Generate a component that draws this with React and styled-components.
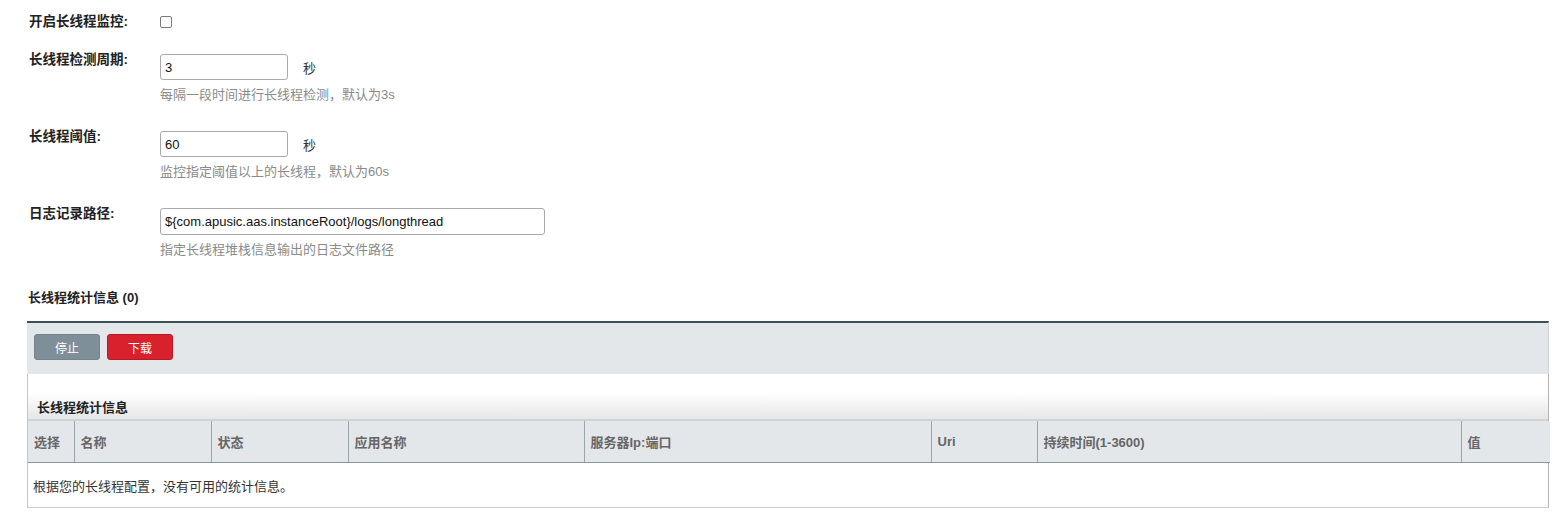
import React from "react";
import styled, { createGlobalStyle } from "styled-components";

const GlobalStyle = createGlobalStyle`
    body{
        margin: 0;
        background: #ffffff;
        font-family: "Liberation Sans", "Noto Sans CJK SC", sans-serif;
        font-size: 13px;
        color: #333333;
    }
`;

const columns = [
    { title: "选择", width: 46 },
    { title: "名称", width: 137 },
    { title: "状态", width: 137 },
    { title: "应用名称", width: 236 },
    { title: "服务器Ip:端口", width: 347 },
    { title: "Uri", width: 106 },
    { title: "持续时间(1-3600)", width: 424 },
    { title: "值", width: 89 },
];

function App()
{
    return(
        <PageStyled>
            <GlobalStyle />
            <FormRow $top={13}>
                <Label>开启长线程监控:</Label>
                <Field>
                    <Check type="checkbox" />
                </Field>
            </FormRow>

            <FormRow $top={23}>
                <Label $lift>长线程检测周期:</Label>
                <Field>
                    <InputLine>
                        <TextInput $width={128} defaultValue="3" />
                        <Unit>秒</Unit>
                    </InputLine>
                    <Hint>每隔一段时间进行长线程检测，默认为3s</Hint>
                </Field>
            </FormRow>

            <FormRow $top={27}>
                <Label $lift>长线程阈值:</Label>
                <Field>
                    <InputLine>
                        <TextInput $width={128} defaultValue="60" />
                        <Unit>秒</Unit>
                    </InputLine>
                    <Hint>监控指定阈值以上的长线程，默认为60s</Hint>
                </Field>
            </FormRow>

            <FormRow $top={27}>
                <Label $lift>日志记录路径:</Label>
                <Field>
                    <InputLine>
                        <TextInput $width={385} $height={27} defaultValue="${com.apusic.aas.instanceRoot}/logs/longthread" />
                    </InputLine>
                    <Hint>指定长线程堆栈信息输出的日志文件路径</Hint>
                </Field>
            </FormRow>

            <SectionTitle>长线程统计信息 (0)</SectionTitle>

            <Panel>
                <Toolbar>
                    <Button $kind="stop">停止</Button>
                    <Button $kind="download">下载</Button>
                </Toolbar>
                <TableBox>
                    <Caption>长线程统计信息</Caption>
                    <Table>
                        <colgroup>
                            {columns.map((c) => <col key={c.title} style={{ width: c.width }} />)}
                        </colgroup>
                        <thead>
                            <tr>
                                {columns.map((c) => <HeadCell key={c.title}>{c.title}</HeadCell>)}
                            </tr>
                        </thead>
                        <tbody>
                            <tr>
                                <EmptyCell colSpan={columns.length}>根据您的长线程配置，没有可用的统计信息。</EmptyCell>
                            </tr>
                        </tbody>
                    </Table>
                </TableBox>
            </Panel>
        </PageStyled>
    )
}

const PageStyled = styled.div`
    padding: 0 19px 20px 27px;
`;

const FormRow = styled.div`
    display: flex;
    align-items: flex-start;
    margin-top: ${(p) => p.$top}px;
`;

const Label = styled.div`
    width: 131px;
    padding-left: 2px;
    margin-top: ${(p) => (p.$lift ? -3 : 0)}px;
    box-sizing: border-box;
    font-weight: bold;
    font-size: 13.5px;
    line-height: 18px;
    color: #222222;
    flex-shrink: 0;
`;

const Field = styled.div`
    display: flex;
    flex-direction: column;
`;

const Check = styled.input`
    appearance: none;
    margin: 3px 0 0 2px;
    width: 12px;
    height: 12px;
    border: 1px solid #7a7a7a;
    border-radius: 2px;
    background: #ffffff;
`;

const InputLine = styled.div`
    display: flex;
    align-items: center;
    gap: 15px;
`;

const TextInput = styled.input`
    width: ${(p) => p.$width}px;
    height: ${(p) => p.$height || 26}px;
    box-sizing: border-box;
    margin: 0 0 0 2px;
    padding: 0 4px;
    border: 1px solid #a9a9a9;
    border-radius: 3px;
    font-family: "Liberation Sans", "Noto Sans CJK SC", sans-serif;
    font-size: 13px;
    color: #111111;
    outline: none;
`;

const Unit = styled.span`
    font-size: 13px;
    color: #333333;
`;

const Hint = styled.div`
    margin: 6px 0 0 2px;
    font-size: 13px;
    line-height: 18px;
    color: #8a8a8a;
`;

const SectionTitle = styled.div`
    margin-top: 30px;
    padding-left: 1px;
    font-weight: bold;
    font-size: 13px;
    line-height: 18px;
    color: #222222;
`;

const Panel = styled.div`
    margin-top: 14px;
`;

const Toolbar = styled.div`
    display: flex;
    gap: 7px;
    height: 53px;
    box-sizing: border-box;
    padding: 11px 7px 0;
    background: #e4e7ea;
    border-top: 2px solid #3d4f59;
    border-right: 1px solid #d0d4d6;
`;

const Button = styled.button`
    width: 66px;
    height: 26px;
    border-radius: 3px;
    border: 1px solid ${(p) => (p.$kind === "download" ? "#b51b25" : "#74848d")};
    background: ${(p) => (p.$kind === "download" ? "#d8212c" : "#7f8f99")};
    color: #ffffff;
    font-family: "Liberation Sans", "Noto Sans CJK SC", sans-serif;
    font-size: 12px;
    padding: 0;
`;

const TableBox = styled.div`
    border-left: 1px solid #c4c4c4;
    border-right: 1px solid #b4b4b4;
    border-bottom: 1px solid #cccccc;
`;

const Caption = styled.div`
    height: 47px;
    box-sizing: border-box;
    display: flex;
    align-items: flex-end;
    padding: 0 0 3px 9px;
    background: linear-gradient(to bottom, #ffffff 40%, #e6e6e6 100%);
    border-bottom: 2px solid #cfd3d5;
    font-weight: bold;
    font-size: 13px;
    color: #222222;
`;

const Table = styled.table`
    width: 100%;
    table-layout: fixed;
    border-collapse: collapse;
`;

const HeadCell = styled.th`
    height: 41px;
    padding: 0 0 0 6px;
    text-align: left;
    background: #e4e7ea;
    border-left: 1px solid #9aa6aa;
    border-bottom: 1px solid #8a989e;
    font-weight: bold;
    font-size: 13px;
    color: #666666;
    white-space: nowrap;
    &:first-child{
        border-left: none;
    }
`;

const EmptyCell = styled.td`
    height: 44px;
    padding: 0 0 0 5px;
    font-size: 13px;
    color: #333333;
`;

export default App
